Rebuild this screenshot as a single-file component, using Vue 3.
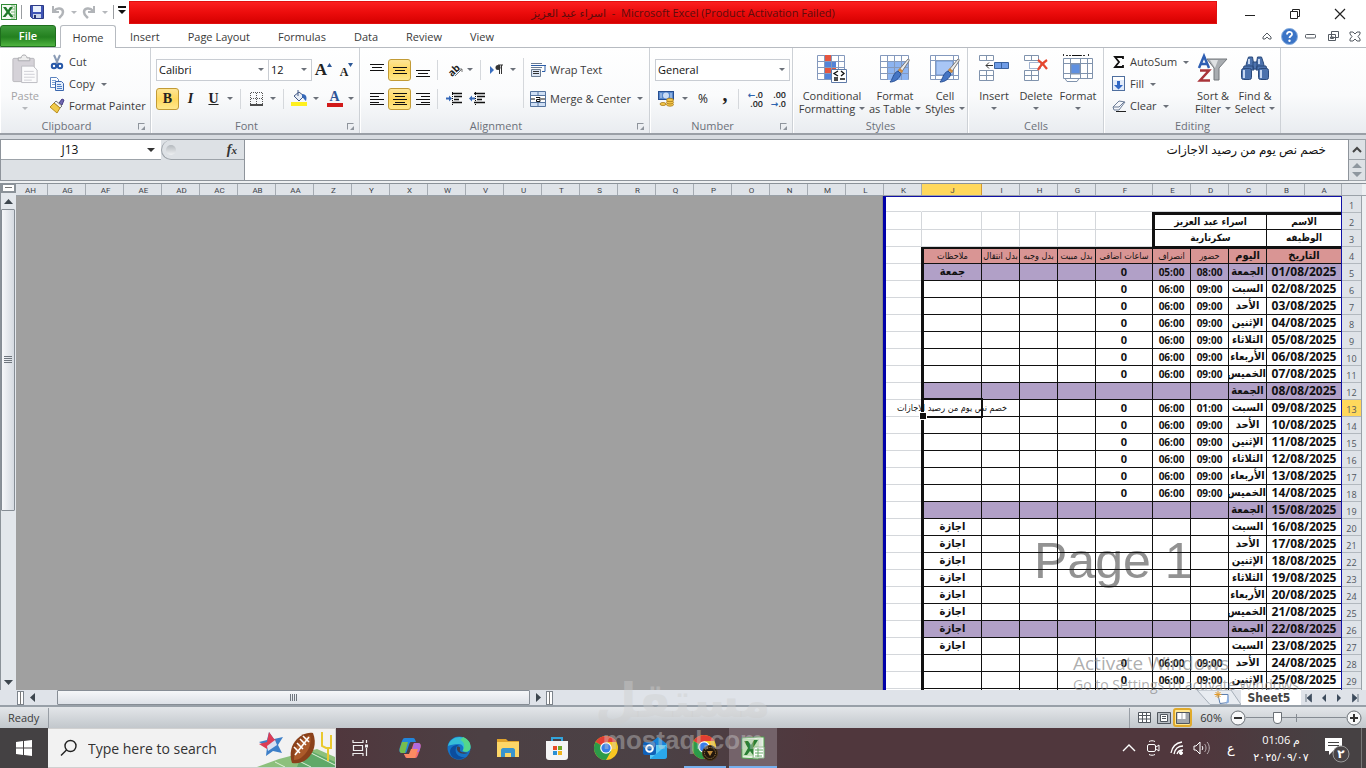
<script setup>
import { ref } from 'vue'

const tabs = ['Insert', 'Page Layout', 'Formulas', 'Data', 'Review', 'View']
const fontName = ref('Calibri')
const fontSize = ref('12')
const numberFormat = ref('General')
const cellRef = ref('J13')
const formula = ref('خصم نص يوم من رصيد الاجازات')
const zoom = ref(30)

const columns = 'AG AF AE AD AC AB AA Z Y X W V U T S R Q P O N M L K J I H G F E D C B A'.split(' ')

const dayNames = ['الجمعة', 'السبت', 'الأحد', 'الإثنين', 'الثلاثاء', 'الأربعاء', 'الخميس']
const heads = ['اليوم', 'حضور', 'انصراف', 'ساعات اضافى', 'بدل مبيت', 'بدل وجبه', 'بدل انتقال', 'ملاحظات']

const days = Array.from({ length: 26 }, (_, i) => {
  const d = i + 1
  const friday = i % 7 === 0
  const leave = d >= 16 && d <= 23
  const worked = d === 1 || (!friday && !leave)
  return {
    d,
    date: String(d).padStart(2, '0') + '/08/2025',
    day: dayNames[i % 7],
    friday,
    start: worked ? (d === 1 ? '08:00' : d === 9 ? '01:00' : '09:00') : '',
    end: worked ? (d === 1 ? '05:00' : '06:00') : '',
    extra: worked ? '0' : '',
    note: d === 1 ? 'جمعة' : leave ? 'اجازة' : ''
  }
})
</script>

<template>
  <div class="app">
    <header class="titlebar">
      <div class="quick">
        <svg class="xl" width="18" height="18" viewBox="0 0 18 18"><rect x="1.500" y="1.500" width="15" height="15" fill="#f4faf2" stroke="#2f8a35"/><path d="M11 3h4v12h-4M11 6h4M11 9h4M11 12h4" fill="none" stroke="#7db97a"/><path d="M3 4h3l2 3 2-3h3L9.500 9l4 5h-3L8 10.800 5.500 14H2.500L6.500 9z" fill="#207a2a"/></svg>
        <i class="vline"></i>
        <button aria-label="Save"><svg width="16" height="16" viewBox="0 0 16 16"><path d="M1.500 1.500h13v13h-11l-2-2z" fill="#3f55b5" stroke="#2c3b86"/><path d="M4 2h8v6H4z" fill="#e9f0fb"/><path d="M4 10h8v4H4z" fill="#c9d4ea"/><path d="M5 11h2v3H5z" fill="#26336f"/></svg></button>
        <button class="wide" aria-label="Undo"><svg width="14" height="14" viewBox="0 0 14 14"><path d="M2 1v6h6" fill="none" stroke="#b1b4b8" stroke-width="2"/><path d="M3 6c3-4 9-3 9 1 0 3-2 4-4 6" fill="none" stroke="#b1b4b8" stroke-width="2.500"/></svg><i class="dd pale"></i></button>
        <button class="wide" aria-label="Redo"><svg width="14" height="14" viewBox="0 0 14 14"><path d="M12 1v6H6" fill="none" stroke="#b1b4b8" stroke-width="2"/><path d="M11 6C8 2 2 3 2 7c0 3 2 4 4 6" fill="none" stroke="#b1b4b8" stroke-width="2.500"/></svg><i class="dd pale"></i></button>
        <i class="vline"></i>
        <button class="customize" aria-label="Customize Quick Access Toolbar"><i></i></button>
      </div>
      <div class="caption" dir="ltr"><bdi>اسراء عبد العزيز</bdi>&nbsp; - &nbsp;Microsoft Excel (Product Activation Failed)</div>
      <div class="winbtns">
        <button aria-label="Minimize"><svg width="12" height="12"><path d="M1 7.500h10" stroke="#222"/></svg></button>
        <button aria-label="Restore"><svg width="12" height="12" fill="none" stroke="#222"><path d="M1.500 3.500h7v7h-7zM3.500 3V1.500h7v7H9"/></svg></button>
        <button aria-label="Close"><svg width="12" height="12"><path d="M1 1l10 10M11 1L1 11" stroke="#222" stroke-width="1.200"/></svg></button>
      </div>
    </header>

    <nav class="tabs">
      <button class="file">File</button>
      <button class="home">Home</button>
      <button v-for="t in tabs" :key="t" class="tab">{{ t }}</button>
      <div class="docbtns">
        <button aria-label="Minimize the Ribbon"><svg width="10" height="9" viewBox="0 0 10 9"><path d="M1 5l4-4 4 4v2H7L5 5 3 7H1z" fill="#fff" stroke="#555b63"/></svg></button>
        <button aria-label="Help"><svg width="17" height="17" viewBox="0 0 17 17"><circle cx="8.500" cy="8.500" r="8" fill="#3b74c6" stroke="#8bb0df"/><path d="M6 6.500C6 3 11 3 11 6.200 11 8 8.500 8 8.500 10" fill="none" stroke="#fff" stroke-width="1.800"/><circle cx="8.500" cy="12.700" r="1.200" fill="#fff"/></svg></button>
        <button aria-label="Minimize window"><svg width="12" height="6"><rect x=".5" y="1.500" width="10" height="3.500" rx="1" fill="#fff" stroke="#555b63"/></svg></button>
        <button aria-label="Restore window"><svg width="13" height="12" fill="#fff" stroke="#555b63"><path d="M4.500 1.500h7v6h-7zM1.500 4.500h7v6h-7zM3.500 7h3v1.500h-3z"/></svg></button>
        <button aria-label="Close window"><svg width="12" height="11" viewBox="0 0 12 11"><path d="M1 1h3l2 2 2-2h3v2L9 5.500 11 8v2H8L6 8l-2 2H1V8l2-2.500L1 3z" fill="#fff" stroke="#555b63"/></svg></button>
      </div>
    </nav>

    <section class="ribbon">
      <div class="group clip">
        <div class="body">
          <button class="big disabled">
            <svg width="28" height="31" viewBox="0 0 28 31"><rect x="1.500" y="4.500" width="22" height="24" rx="1" fill="#d5d2d8" stroke="#b9b7bd"/><path d="M7 7V4h3c0-4 6-4 6 0h3v3z" fill="#eee" stroke="#a9a9ad"/><path d="M10.500 12.500h12l4 4v13h-16z" fill="#fbfbfc" stroke="#bcbcc2"/><path d="M13 18h10M13 21h11M13 24h11M13 27h8" stroke="#cfcfd6"/></svg>
            <span>Paste</span><i class="dd pale"></i>
          </button>
          <div class="stack">
            <button class="small"><svg width="16" height="16" viewBox="0 0 16 16"><path d="M5 1l4 9M11 1L7 10" stroke="#8a9bb5" stroke-width="2"/><circle cx="5" cy="12" r="2.200" fill="none" stroke="#2758a8" stroke-width="2"/><circle cx="11" cy="12" r="2.200" fill="none" stroke="#2758a8" stroke-width="2"/></svg>Cut</button>
            <button class="small"><svg width="16" height="16" viewBox="0 0 16 16"><path d="M1.500 1.500h6l2 2v8h-8z" fill="#fff" stroke="#5b83bf"/><path d="M3 4.500h4M3 6.500h5M3 8.500h5" stroke="#7ea3d6"/><path d="M6.500 5.500h6l2 2v7h-8z" fill="#e4eefb" stroke="#3a67ae"/><path d="M8 8.500h4M8 10.500h5M8 12.500h5" stroke="#4f80c6"/></svg>Copy<i class="dd"></i></button>
            <button class="small"><svg width="16" height="16" viewBox="0 0 16 16"><path d="M10 5l3-4 2 1-2 5z" fill="#7068b0" stroke="#443c86"/><path d="M7 3l6 5-2 2-6-5z" fill="#f4f4f4" stroke="#777"/><path d="M5 5l6 5-3 5-7-6z" fill="#f0ca49" stroke="#b88c1c"/></svg>Format Painter</button>
          </div>
        </div>
        <div class="label">Clipboard<i class="launch"></i></div>
      </div>

      <div class="group font">
        <div class="rows">
          <div class="line">
            <span class="combo w-name"><select v-model="fontName" aria-label="Font"><option>Calibri</option></select><i class="dd"></i></span>
            <span class="combo w-size"><select v-model="fontSize" aria-label="Font size"><option>12</option></select><i class="dd"></i></span>
            <button class="ico grow" aria-label="Increase font size"><b class="serif">A</b><svg width="5" height="4"><path d="M0 4l2.500-4L5 4z" fill="#2b5797"/></svg></button>
            <button class="ico shrink" aria-label="Decrease font size"><b class="serif">A</b><svg width="5" height="4"><path d="M0 0h5L2.500 4z" fill="#2b5797"/></svg></button>
          </div>
          <div class="line">
            <button class="ico on" aria-label="Bold"><b class="serif">B</b></button>
            <button class="ico" aria-label="Italic"><b class="serif italic">I</b></button>
            <button class="ico" aria-label="Underline"><b class="serif under">U</b></button><i class="dd ddgap"></i>
            <i class="sep"></i>
            <button class="ico" aria-label="Borders"><svg width="14" height="14"><path d="M.5 1v11M6.500 1v11M12.500 1v11M1 .5h12M1 6.500h12" stroke="#555" stroke-dasharray="1 1"/><path d="M0 13h13" stroke="#111" stroke-width="1.500"/></svg></button><i class="dd ddgap"></i>
            <i class="sep"></i>
            <button class="ico" aria-label="Fill color"><svg width="17" height="17" viewBox="0 0 17 17"><path d="M3 6l5-4 5 4-5 5z" fill="#e8eef7" stroke="#445a86"/><path d="M7 0v6" stroke="#445a86"/><path d="M11 4c5 0 5 4 4 7-2-1-2-3-4-4z" fill="#3568b8"/><rect x="0" y="12" width="16" height="4" fill="#fff01e"/></svg></button><i class="dd ddgap"></i>
            <button class="ico" aria-label="Font color"><span class="fcolor serif">A</span></button><i class="dd ddgap"></i>
          </div>
        </div>
        <div class="label">Font<i class="launch"></i></div>
      </div>

      <div class="group align">
        <div class="body">
          <div class="rows">
            <div class="line">
              <button class="ico" aria-label="Top align"><svg width="14" height="16" stroke="#111"><path d="M0 2.500h14M2 5.500h10M0 8.500h14"/></svg></button>
              <button class="ico on" aria-label="Middle align"><svg width="14" height="16" stroke="#111"><path d="M0 5.500h14M2 8.500h10M0 11.500h14"/></svg></button>
              <button class="ico" aria-label="Bottom align"><svg width="14" height="16" stroke="#111"><path d="M0 8.500h14M2 11.500h10M0 14.500h14"/></svg></button>
              <i class="sep"></i>
              <button class="ico orient" aria-label="Orientation"><svg width="17" height="17" viewBox="0 0 17 17"><text x="0" y="13" transform="rotate(-45 6 10)" font-size="10" font-weight="700" fill="#222">ab</text><path d="M7 15l7-7M14 11V8h-3" stroke="#777" fill="none"/></svg></button><i class="dd ddgap"></i>
              <i class="sep"></i>
              <button class="ico" aria-label="Text direction"><svg width="14" height="12" viewBox="0 0 14 12"><path d="M0 2l4 4-4 4z" fill="#3a6fc0"/><path d="M8 1h5M9.500 1v9M11.500 1v9" stroke="#333" fill="none"/><circle cx="8" cy="3.500" r="2.500" fill="#333"/></svg></button><i class="dd ddgap"></i>
            </div>
            <div class="line">
              <button class="ico" aria-label="Align left"><svg width="14" height="14" stroke="#111"><path d="M0 1.500h14M0 4.500h9M0 7.500h14M0 10.500h9M0 12.500h14"/></svg></button>
              <button class="ico on" aria-label="Center"><svg width="14" height="14" stroke="#111"><path d="M0 1.500h14M2 4.500h10M0 7.500h14M2 10.500h10M0 12.500h14"/></svg></button>
              <button class="ico" aria-label="Align right"><svg width="14" height="14" stroke="#111"><path d="M0 1.500h14M5 4.500h9M0 7.500h14M5 10.500h9M0 12.500h14"/></svg></button>
              <i class="sep"></i>
              <button class="ico" aria-label="Decrease indent"><svg width="16" height="14" viewBox="0 0 16 14"><path d="M6 1.500h10M8 4.500h8M8 7.500h5M6 10.500h10" stroke="#111" stroke-width="1.500"/><path d="M6.500 0v14" stroke="#111" stroke-dasharray="1 1"/><path d="M0 6.500h4" stroke="#3568b8" stroke-width="2"/><path d="M3 3.500l3 3-3 3z" fill="#3568b8"/></svg></button>
              <button class="ico" aria-label="Increase indent"><svg width="16" height="14" viewBox="0 0 16 14"><path d="M5 1.500h11M8 4.500h8M8 7.500h5M5 10.500h11" stroke="#111" stroke-width="1.500"/><path d="M6.500 0v14" stroke="#111" stroke-dasharray="1 1"/><path d="M2 6.500h4" stroke="#3568b8" stroke-width="2"/><path d="M3 3.500l-3 3 3 3z" fill="#3568b8"/></svg></button>
            </div>
          </div>
          <i class="sep tall"></i>
          <div class="rows texts">
            <div class="line"><button class="small"><svg width="16" height="16" viewBox="0 0 16 16"><path d="M1 1.500h11M1 5.500h11" stroke="#6b7c93"/><path d="M1 3.500h15M10 3.500h5v6h-3" stroke="#2d5ea8" fill="none"/><path d="M1.500 7.500h9v7h-9z" fill="#dce6f4" stroke="#6b7c93"/><path d="M3 9.500h6M3 11.500h6" stroke="#333"/></svg>Wrap Text</button></div>
            <div class="line"><button class="small"><svg width="16" height="16" viewBox="0 0 16 16"><path d="M.5.500h15v15H.5zM.5 4.500h15M.5 11.500h15M8 1v3M8 12v3" fill="#cfdff4" stroke="#55749f"/><path d="M1 5h14v6H1z" fill="#fff"/><path d="M1 8h4M11 8h4" stroke="#111"/><path d="M6 6.500h4v4H6.500V8.500H10" fill="none" stroke="#111"/></svg>Merge &amp; Center<i class="dd"></i></button></div>
          </div>
        </div>
        <div class="label">Alignment<i class="launch"></i></div>
      </div>

      <div class="group number">
        <div class="rows">
          <div class="line"><span class="combo w-num"><select v-model="numberFormat" aria-label="Number format"><option>General</option></select><i class="dd"></i></span></div>
          <div class="line">
            <button class="ico" aria-label="Accounting format"><svg width="17" height="17" viewBox="0 0 17 17"><rect x=".5" y="1.500" width="15" height="8" fill="#5788cc" stroke="#274f91"/><ellipse cx="8" cy="5.500" rx="3" ry="3" fill="#cadcf4"/><path d="M3 3v5M13 3v5" stroke="#cadcf4"/><g fill="#f3c74b" stroke="#a87916" stroke-width=".8"><ellipse cx="12" cy="14.500" rx="3.500" ry="1.700"/><ellipse cx="12" cy="12.300" rx="3.500" ry="1.700"/><ellipse cx="12" cy="10" rx="3.500" ry="1.700"/><ellipse cx="5" cy="14" rx="3" ry="1.500"/></g></svg></button><i class="dd ddgap"></i>
            <button class="ico glyph">%</button>
            <button class="ico glyph comma" aria-label="Comma style">,</button>
            <i class="sep"></i>
            <button class="ico dec"><span><em>←</em>.0</span><span>.00</span></button>
            <button class="ico dec"><span>.00</span><span><em>→</em>.0</span></button>
          </div>
        </div>
        <div class="label">Number<i class="launch"></i></div>
      </div>

      <div class="group styles">
        <div class="body">
          <button class="big w68">
            <svg width="30" height="30" viewBox="0 0 30 30"><path d="M.5 1.500h27v24H.5z" fill="#fff" stroke="#8499bd"/><path d="M7 1h7v6H7zM7 13h12v6H7z" fill="#e5553f"/><path d="M7 7h12v6H7zM7 19h7v6H7z" fill="#5383d8"/><path d="M.5 7.500h27M.5 13.500h27M.5 19.500h27M7.500 1v25M14.500 1v25M21.500 1v25" stroke="#8499bd"/><path d="M14.500 15.500h15v13h-15z" fill="#fff" stroke="#5e7aa8"/><path d="M21 17l-4 2.500 4 2.500M17 24h4M17 26h4M24 17l3 2.500-3 2.500M23 25h5" fill="none" stroke="#111" stroke-width="1.300"/></svg>
            <span>Conditional</span><span>Formatting<i class="dd"></i></span>
          </button>
          <button class="big w58">
            <svg width="30" height="30" viewBox="0 0 30 30"><path d="M.5 1.500h28v24H.5z" fill="#fff" stroke="#8499bd"/><path d="M8 8h20v18H8z" fill="#8db4f1"/><path d="M.5 7.500h28M.5 13.500h28M.5 19.500h28M7.500 1v25M14.500 1v25M21.500 1v25" stroke="#8499bd"/><path d="M28 5c1 0 1.500 1 1 2l-8 12-3-2z" fill="#ececec" stroke="#777"/><path d="M18 17l3 3c-2 5-6 8-11 8 3-3 3-9 8-11z" fill="#4575c4" stroke="#284f93"/><path d="M20 14l3 3-1 2-4-3z" fill="#d08a3e"/></svg>
            <span>Format</span><span>as Table<i class="dd"></i></span>
          </button>
          <button class="big w42">
            <svg width="30" height="30" viewBox="0 0 30 30"><path d="M.5 1.500h28v24H.5z" fill="#fff" stroke="#8499bd"/><path d="M6 7h17v14H6z" fill="#a9c6f5" stroke="#6f93cf"/><path d="M.5 6.500h28M.5 21.500h28M5.500 1v25M23.500 1v25" stroke="#8499bd"/><path d="M28 5c1 0 1.500 1 1 2l-8 12-3-2z" fill="#ececec" stroke="#777"/><path d="M18 17l3 3c-2 5-6 8-11 8 3-3 3-9 8-11z" fill="#4575c4" stroke="#284f93"/><path d="M20 14l3 3-1 2-4-3z" fill="#d08a3e"/></svg>
            <span>Cell</span><span>Styles<i class="dd"></i></span>
          </button>
        </div>
        <div class="label">Styles</div>
      </div>

      <div class="group cells">
        <div class="body">
          <button class="big w42">
            <svg width="30" height="30" viewBox="0 0 30 30" fill="#fff" stroke="#8093ad"><path d="M.5 1.500h14v5H.5zM7.500 2v5M.5 16.500h14v10H.5zM7.500 17v10M.5 21.500h14"/><path d="M15.500 8.500h14v6h-14zM22.500 9v6" fill="#6f9ce6" stroke="#39629f"/><path d="M7 11.500h7M10 8.500l-3 3 3 3" fill="none" stroke="#333"/></svg>
            <span>Insert</span><i class="dd"></i>
          </button>
          <button class="big w42">
            <svg width="30" height="30" viewBox="0 0 30 30" fill="#fff" stroke="#8093ad"><path d="M3.500 1.500h14v5h-14zM10.500 2v5M3.500 16.500h14v10h-14zM10.500 17v10M3.500 21.500h14"/><path d="M8.500 8.500h11v6h-11z" stroke="#4a6da5" stroke-dasharray="1 1"/><path d="M17 6c3 2 6 5 9 9M26 6c-4 3-7 6-9 10" fill="none" stroke="#e5472f" stroke-width="2.200"/></svg>
            <span>Delete</span><i class="dd"></i>
          </button>
          <button class="big w42">
            <svg width="32" height="30" viewBox="0 0 32 30" fill="#fff" stroke="#8093ad"><path d="M1.500 4.500h29v20h-29z"/><path d="M9 10h9v10H9z" fill="#5f90e0"/><path fill="none" d="M1 9.500h29M1 19.500h29M8.500 5v20M18.500 5v20M25.500 5v20"/><path d="M3 24.500l2 3h10l2-3z"/><path d="M1.500 0v3M26.500 0v3M4 1.500h6M18 1.500h6" stroke="#333" stroke-dasharray="2 1"/><path d="M10 1.500h9" stroke="#111"/></svg>
            <span>Format</span><i class="dd"></i>
          </button>
        </div>
        <div class="label">Cells</div>
      </div>

      <div class="group editing">
        <div class="body">
          <div class="stack">
            <button class="small"><svg width="14" height="16" viewBox="0 0 14 16"><path d="M11 5V3H3l4 5-4 5h8v-2" fill="none" stroke="#111" stroke-width="1.800"/></svg>AutoSum<i class="dd"></i></button>
            <button class="small"><svg width="14" height="16" viewBox="0 0 14 16"><rect x=".5" y=".5" width="12" height="14" fill="#e1ebfa" stroke="#4f6f9f"/><path d="M1 1h11v3H1z" fill="#fff"/><path d="M5 5h3v4h3l-4.500 4.500L2 9h3z" fill="#2f66c4"/></svg>Fill<i class="dd"></i></button>
            <button class="small"><svg width="14" height="14" viewBox="0 0 14 14"><path d="M7 2l6 1-6 8H2L1 8z" fill="#f4f6fa" stroke="#6d7d97"/><path d="M1 8h6l5-5" fill="none" stroke="#6d7d97"/><path d="M4 12.500h10" stroke="#222"/></svg>Clear<i class="dd"></i></button>
          </div>
          <button class="big w42">
            <svg width="30" height="30" viewBox="0 0 30 30"><path d="M9 5h20l-8 9v12h-5V14z" fill="#a9adb1" stroke="#74787d"/><path d="M12 6h8l-3 8z" fill="#dfe1e3"/><path d="M1 14L6 2l5 12M3 10h6" fill="none" stroke="#2f5fb3" stroke-width="2.500"/><path d="M2 16.500h9l-9 10h10" fill="none" stroke="#a9343a" stroke-width="2.500"/></svg>
            <span>Sort &amp;</span><span>Filter<i class="dd"></i></span>
          </button>
          <button class="big w42">
            <svg width="28" height="30" viewBox="0 0 28 30"><g fill="#4c72ad" stroke="#2b4a7c"><path d="M5.500 9l2-6h4l1 6v5h-8zM22.500 9l-2-6h-4l-1 6v5h8z"/><path d="M3 12h9l1 4H2zM25 12h-9l-1 4h11zM12 8h4v7h-4z"/><rect x=".5" y="14.500" width="10" height="11" rx="2"/><rect x="17.500" y="14.500" width="10" height="11" rx="2"/></g><path d="M3 16v8M20 16v8M8 5v5M18 5v5" stroke="#c7d8f2" stroke-width="2"/></svg>
            <span>Find &amp;</span><span>Select<i class="dd"></i></span>
          </button>
        </div>
        <div class="label">Editing</div>
      </div>
    </section>

    <section class="fbar">
      <div class="fleft">
        <div class="namebox"><input v-model="cellRef" aria-label="Name Box"><i class="dd dark"></i></div>
        <div class="fxarea"><i class="knob"></i><button aria-label="Insert function">f<small>x</small></button></div>
      </div>
      <textarea v-model="formula" dir="rtl" rows="1" aria-label="Formula Bar"></textarea>
      <div class="fscroll">
        <button aria-label="Expand Formula Bar"><svg width="10" height="6"><path d="M1 5l4-4 4 4" fill="none" stroke="#444" stroke-width="2"/></svg></button>
        <div><svg width="10" height="16"><path d="M0 6l5-5 5 5zM0 10h10l-5 5z" fill="#8e979f"/></svg></div>
      </div>
    </section>

    <main class="sheet">
      <div class="vscroll">
        <div class="split"><i></i></div>
        <button aria-label="Scroll up"><svg width="9" height="5"><path d="M0 5l4.500-5L9 5z" fill="#3d464e"/></svg></button>
        <div class="vtrack"><div class="vthumb"><i></i></div></div>
        <button aria-label="Scroll down"><svg width="9" height="5"><path d="M0 0h9L4.500 5z" fill="#3d464e"/></svg></button>
      </div>
      <div class="canvas">
        <div class="colheads">
          <span class="ch rest">AH</span>
          <span v-for="c in columns" :key="c" class="ch" :class="'c' + c">{{ c }}</span>
          <span class="corner"></span>
        </div>
        <div class="area">
          <div class="outside"></div>
          <div class="page">
            <div class="pagemark">Page 1</div>
            <table dir="rtl">
              <colgroup><col class="k75"><col class="k38"><col class="k38"><col class="k38"><col class="k57"><col class="k38"><col class="k38"><col class="k38"><col class="k60"><col></colgroup>
              <tbody>
                <tr class="r1"><td colspan="9" class="plain nol"></td><td class="plain"></td></tr>
                <tr class="r2"><th class="top">الاسم</th><td colspan="3" class="top thick">اسراء عبد العزيز</td><td class="plain"></td><td class="plain"></td><td class="plain"></td><td class="plain"></td><td class="plain"></td><td class="plain"></td></tr>
                <tr class="r3"><th>الوظيفه</th><td colspan="3" class="thick">سكرتارية</td><td class="plain"></td><td class="plain"></td><td class="plain"></td><td class="plain"></td><td class="plain"></td><td class="plain"></td></tr>
                <tr class="heads"><th>التاريخ</th><th v-for="(h, i) in heads" :key="h" :class="{ sm: i > 0, thick: i === 7 }">{{ h }}</th><td class="plain"></td></tr>
                <tr v-for="r in days" :key="r.d" :class="{ fri: r.friday }">
                  <td class="date">{{ r.date }}</td><td class="day">{{ r.day }}</td><td class="time">{{ r.start }}</td><td class="time">{{ r.end }}</td><td class="zero">{{ r.extra }}</td><td></td><td></td><td></td>
                  <td class="thick" :class="{ picked: r.d === 9 }"><div v-if="r.d === 9" class="cursor"><span>{{ formula }}</span></div><template v-else>{{ r.note }}</template></td>
                  <td class="plain"></td>
                </tr>
              </tbody>
            </table>
          </div>
          <div class="rowheads"><span v-for="n in 30" :key="n" :class="{ hot: n === 13 }">{{ n }}</span></div>
          <div class="edge"></div>
        </div>
      </div>
    </main>

    <div class="bottom">
      <i class="nub"></i>
      <button aria-label="Scroll left"><svg width="5" height="9"><path d="M5 0v9L0 4.500z" fill="#3d464e"/></svg></button>
      <div class="hthumb"><i></i></div>
      <button aria-label="Scroll right"><svg width="5" height="9"><path d="M0 0v9l5-4.500z" fill="#3d464e"/></svg></button>
      <i class="nub second"></i>
      <div class="filler"></div>
      <button class="newsheet" aria-label="Insert Worksheet"><svg width="48" height="15" viewBox="0 0 48 15"><path d="M0 0l13 14.500h31L34 0z" fill="#e8ecf1" stroke="#a7b0ba"/><path d="M21 4.500h10v8l-8 1z" fill="#fff" stroke="#5e7fae"/><path d="M31 4l1 8-3 2z" fill="#8fb3e4"/><path d="M21 1v7M17.500 4.500h7M18.500 2l5 5M23.500 2l-5 5" stroke="#e09a2b"/></svg></button>
      <button class="sheettab">Sheet5</button>
      <div class="sheetnav">
        <button aria-label="First sheet"><svg width="7" height="8"><path d="M1 0v8M6.500 0v8L2 4z" fill="#3c4b5c" stroke="#3c4b5c" stroke-width=".7"/></svg></button>
        <button aria-label="Previous sheet"><svg width="5" height="8"><path d="M4 0v8L0 4z" fill="#3c4b5c"/></svg></button>
        <button aria-label="Next sheet"><svg width="5" height="8"><path d="M0 0v8l4-4z" fill="#3c4b5c"/></svg></button>
        <button aria-label="Last sheet"><svg width="7" height="8"><path d="M6 0v8M.5 0v8L5 4z" fill="#3c4b5c" stroke="#3c4b5c" stroke-width=".7"/></svg></button>
      </div>
    </div>

    <footer class="status">
      <span class="ready">Ready</span>
      <div class="statusfill"></div>
      <button class="view" aria-label="Normal"><svg width="13" height="11"><path d="M.5.500h12v10H.5zM.5 3.500h12M.5 7h12M4.500 0v11M8.500 0v11" fill="#fff" stroke="#51575e"/></svg></button>
      <button class="view" aria-label="Page Layout"><svg width="14" height="12"><path d="M.5.500h13v11H.5z" fill="#b9bec4" stroke="#51575e"/><path d="M3.500 2.500h7v7h-7zM5 4.500h4M5 6.500h4" fill="#fff" stroke="#51575e"/></svg></button>
      <button class="view sel" aria-label="Page Break Preview"><svg width="14" height="12"><path d="M.5.500h13v11H.5z" fill="#a3a8ad" stroke="#51575e"/><path d="M1.500 1h4v6h-4zM6.500 1h3v6h-3z" fill="#fff"/></svg></button>
      <span class="pct">60%</span>
      <button class="round" aria-label="Zoom out"><svg width="16" height="16"><circle cx="8" cy="8" r="7" fill="#f7f8f9" stroke="#6a7076"/><path d="M4 8h8" stroke="#333" stroke-width="2"/></svg></button>
      <div class="slider"><i></i><input v-model="zoom" type="range" min="0" max="100" aria-label="Zoom"></div>
      <button class="round" aria-label="Zoom in"><svg width="16" height="16"><circle cx="8" cy="8" r="7" fill="#f7f8f9" stroke="#6a7076"/><path d="M4 8h8M8 4v8" stroke="#333" stroke-width="2"/></svg></button>
    </footer>

    <div class="taskbar">
      <button class="start" aria-label="Start"><svg width="16" height="16" fill="#fff"><path d="M0 2l7-1v6.500H0zM8 1l8-1v7.500H8zM0 8.500h7V15l-7-1zM8 8.500h8V16l-8-1z"/></svg></button>
      <div class="search">
        <svg class="mag" width="18" height="18"><circle cx="10.500" cy="7" r="5.500" fill="none" stroke="#222" stroke-width="1.400"/><path d="M6.500 11L1 16.500" stroke="#222" stroke-width="1.500"/></svg>
        <input placeholder="Type here to search" aria-label="Type here to search">
        <svg class="art" width="78" height="38" viewBox="0 0 78 38"><path d="M0 38L22 30 60 20l18 8v10z" fill="#8cc07c"/><path d="M44 28l12-5 22 10v5H40z" fill="#5fa968"/><path d="M18 33l10 5M34 28l20 10M54 24l24 12" stroke="#dff0d8"/><path d="M65 3v14l4 2h5V6M71 18v14" fill="none" stroke="#e9c92f" stroke-width="2"/><path d="M12 3l5 7 9-2-5 8 4 8-9-2-7 5 1-9-8-5 8-2z" fill="#3d7fc8"/><path d="M12 3l5 7 2 1-9 9-8-5 8-2z" fill="#dd3c56"/><path d="M10 17l8-6 2 5-9 6z" fill="#d8e1f3"/><path d="M56 4c4 10 1 20-6 26-5 4-10 5-15 4-3-9-1-18 5-24 5-5 11-7 16-6z" fill="#8a411b"/><path d="M53 6c2 8-1 16-7 21-3 3-6 4-9 4 0-8 2-14 6-18s7-6 10-7z" fill="#ab5a2a"/><path d="M52 8L38 26M46 7l6 6M43 10l6 6M40 14l6 6M37 18l6 6" stroke="#fff" stroke-width="1.600"/></svg>
      </div>
      <button class="app-b" aria-label="Task View"><svg width="17" height="16" fill="none" stroke="#eee"><path d="M1 0v2.500h10V0M1.500 5.500h9v5h-9zM1 16v-2.500h10V16M14.500 0v3M14.500 8v8" stroke-width="1.200"/><path d="M13 4.500h3v3h-3z" fill="#eee" stroke="none"/></svg></button>
      <button class="app-b" aria-label="Copilot"><svg width="24" height="24" viewBox="0 0 24 24"><path d="M7 2h8c2 0 2 2 3 4h-5c-2 0-3 8-5 11H4c-3 0-3-3-2-6l2-6c1-2 1-3 3-3z" fill="#2186dc"/><path d="M2 12l2-6h6L7 17H4c-2 0-3-2-2-5z" fill="#76bd4d"/><path d="M17 22H9c-2 0-2-2-3-4h5c2 0 3-8 5-11h4c3 0 3 3 2 6l-2 6c-1 2-1 3-3 3z" fill="#f06a73"/><path d="M16 7h4c3 0 3 3 2 6l-1 3h-7z" fill="#b06be0"/><path d="M6 18h5l2-5h7l-3 9H9z" fill="#fb8b62"/></svg></button>
      <button class="app-b" aria-label="Edge"><svg width="24" height="24" viewBox="0 0 24 24"><circle cx="12" cy="12" r="11.500" fill="#1572c6"/><path d="M1 10C4-2 22-2 23.500 11c0 4-4 6-8 4 2-2 1-7-4-7C7 8 3 9 1 10z" fill="#35bdd7"/><path d="M16 1c5 2 8 6 7.500 10 0 4-4 6-8 4 3-4 2-9-2-11z" fill="#54d68a"/><path d="M9 12c-2 5 3 10 9 9-7 5-15 1-15-6 1-6 7-6 9-6-2 1-3 2-3 3z" fill="#0c4d9d"/><path d="M10 11c-1 5 4 8 11 6-4-1-9 0-8-4 1-2-2-3-3-2z" fill="#453f49"/></svg></button>
      <button class="app-b" aria-label="File Explorer"><svg width="24" height="22" viewBox="0 0 24 22"><path d="M1 2h9l2 2h11v5H1z" fill="#dfa32c"/><path d="M1 5h22v15H1z" fill="#fcd667"/><path d="M5 20v-7c0-1 1-2 2-2h10c1 0 2 1 2 2v7h-4v-4H9v4z" fill="#3995cf"/></svg></button>
      <button class="app-b" aria-label="Microsoft Store"><svg width="24" height="24" viewBox="0 0 24 24"><path d="M7 6V2h10v4" fill="none" stroke="#32a5dc" stroke-width="2"/><path d="M1 5h22v16c0 2-1 3-3 3H4c-2 0-3-1-3-3z" fill="#f5f5f5"/><path d="M8 10h4v4H8z" fill="#e84b25"/><path d="M13 10h4v4h-4z" fill="#70aa29"/><path d="M8 15h4v4H8z" fill="#2b91d5"/><path d="M13 15h4v4h-4z" fill="#f2b51d"/></svg></button>
      <button class="app-b" aria-label="Chrome"><svg width="24" height="24" viewBox="0 0 24 24"><circle cx="12" cy="12" r="12" fill="#f9c721"/><path d="M12 12L1.600 6A12 12 0 0 1 22.400 6H12z" fill="#e33e32"/><path d="M12 12L1.600 6a12 12 0 0 0 10.400 18l5.200-9z" fill="#2c9b49"/><circle cx="12" cy="12" r="5.800" fill="#fff"/><circle cx="12" cy="12" r="4.600" fill="#387ee8"/></svg></button>
      <button class="app-b" aria-label="Outlook"><svg width="26" height="24" viewBox="0 0 26 24"><path d="M7 8l9-7 9 7v12c0 2-1 3-3 3H9z" fill="#1683d8"/><path d="M8 9h16v9l-8 5H8z" fill="#57c8f5"/><path d="M25 9v11c0 2-1 3-3 3H8z" fill="#2aa8eb"/><rect x="1" y="6" width="13" height="13" rx="2" fill="#0f61b9"/><circle cx="7.500" cy="12.500" r="3.300" fill="none" stroke="#fff" stroke-width="2"/></svg></button>
      <button class="app-b running" aria-label="Chrome profile"><svg width="28" height="26" viewBox="0 0 28 26"><circle cx="13" cy="12" r="12" fill="#f9c721"/><path d="M13 12L2.600 6A12 12 0 0 1 23.400 6H13z" fill="#e33e32"/><path d="M13 12L2.600 6A12 12 0 0 0 13 24l5.200-9z" fill="#2c9b49"/><circle cx="13" cy="12" r="5.800" fill="#fff"/><circle cx="13" cy="12" r="4.600" fill="#387ee8"/><circle cx="19" cy="18" r="7.500" fill="#21170d" stroke="#4d381c"/><circle cx="19" cy="18" r="5.500" fill="none" stroke="#b48a46" stroke-dasharray="1 1"/><path d="M16 16h6l-3 5z" fill="#c08c3a"/></svg></button>
      <button class="app-b running current" aria-label="Excel"><svg width="24" height="24" viewBox="0 0 24 24"><path d="M1 2l16-1h6v18l-6 4-16-1z" fill="#e4f1df" stroke="#4ea24e"/><path d="M2 3h16v17H2z" fill="#bfe0b6"/><path d="M3 5h4l3 4 3-5h4l-5 8 4 7h-4l-3-4-3 4H3l4-7z" fill="#2b7e35"/><path d="M13 11h10v11H12z" fill="#fff" stroke="#8fb98d"/><path d="M14 14h8M14 17h8M14 20h7M17 12v9" stroke="#68a868"/></svg></button>
      <div class="filler"></div>
      <div class="tray">
        <button aria-label="Show hidden icons"><svg width="14" height="8"><path d="M1 7l6-6 6 6" fill="none" stroke="#fff" stroke-width="1.400"/></svg></button>
        <button aria-label="Meet Now"><svg width="14" height="16" fill="none" stroke="#fff"><rect x="1.500" y="4.500" width="8" height="7" rx="1.500"/><path d="M10 7l3-2v6l-3-2M3 1.500c2-1 4-1 6 0M3 14.500c2 1 4 1 6 0"/></svg></button>
        <button aria-label="Network"><svg width="14" height="14" fill="none" stroke="#fff"><path d="M1 12C2 6 6 2 12 1M4 13c1-5 4-8 9-8M7 13c1-3 3-4 6-4" stroke-width="1.300"/><circle cx="11" cy="12" r="1.500" fill="#fff"/></svg></button>
        <button aria-label="Volume"><svg width="17" height="14" fill="none" stroke="#fff"><path d="M1 5h2l4-4v12L3 9H1zM9 5c1 1 1 3 0 4"/><path d="M11.500 3c2 2 2 6 0 8M14 1c3 3 3 9 0 12" stroke="#b9aeb1"/></svg></button>
        <span class="lang">ع</span>
        <span class="clock"><span dir="ltr">01:06 <bdi>م</bdi></span><span dir="rtl">٢٠٢٥/٠٩/٠٧</span></span>
        <button class="note" aria-label="Notifications"><svg width="26" height="26" viewBox="0 0 26 26"><path d="M1 1h17v13H9l-4 4v-4H1z" fill="#fff"/><path d="M4 5.500h11M4 8.500h11" stroke="#444"/><circle cx="17" cy="17" r="8" fill="#4a4547" stroke="#999"/><text x="17" y="21" text-anchor="middle" font-size="12" font-weight="700" fill="#fff">٢</text></svg></button>
      </div>
      <i class="desk"></i>
    </div>

    <div class="activate"><p>Activate Windows</p><small>Go to Settings to activate Windows.</small></div>
    <div class="brand"><b lang="ar">مستقل</b><span>mostaql.com</span></div>
  </div>
</template>

<style>
html, body { margin: 0; height: 100%; overflow: hidden; }
#app { height: 100%; }
</style>

<style scoped>
.app { position: relative; height: 100vh; display: flex; flex-direction: column; overflow: hidden; background: #fff; color: #3b3b3b; font: 11px/14px "Open Sans", "Noto Sans", "DejaVu Sans", sans-serif; }
.app * { box-sizing: border-box; }
button { margin: 0; padding: 0; border: 0; background: none; color: inherit; font: inherit; display: flex; align-items: center; justify-content: center; flex: none; }
svg { display: block; flex: none; overflow: visible; }
input, select, textarea { font: inherit; color: #111; border: 0; margin: 0; padding: 0; background: none; outline: 0; border-radius: 0; appearance: none; }
.filler { flex: 1; min-width: 0; }
.dd { display: inline-block; flex: none; width: 0; height: 0; border: 3px solid transparent; border-top-color: #6b7079; border-bottom: 0; }
.dd.pale { border-top-color: #b5b8bc; }
.dd.dark { border-width: 4px; border-bottom: 0; border-top-color: #333; }

.titlebar { height: 24px; display: flex; flex: none; }
.quick { width: 129px; display: flex; align-items: center; flex: none; }
.vline { width: 1px; height: 14px; background: #9a9da1; margin: 0 4px 0 3px; }
.quick button { width: 22px; }
.quick .wide { width: 31px; gap: 6px; }
.quick .customize { width: 8px; }
.customize i { border: 4px solid transparent; border-bottom: 0; border-top-color: #111; position: relative; }
.customize i::before { content: ""; position: absolute; left: -4px; top: -8px; width: 8px; height: 2px; background: #111; }
.caption { flex: 1; margin-top: 1px; background: linear-gradient(#fb2020, #ec0c0c 50%, #d60000); border: 1px solid #e01010; color: #5c0d0d; text-align: center; line-height: 22px; padding-left: 20px; }
.winbtns { width: 149px; display: flex; align-items: center; padding: 4px 3px 0 10px; flex: none; }
.winbtns button { flex: 1; }

.tabs { height: 24px; display: flex; flex: none; border-bottom: 1px solid #b7bbc1; padding-top: 1px; }
.tabs .file { width: 56px; margin-right: 4px; background: linear-gradient(#3f9a3c, #23801f 55%, #4fb340); border: 1px solid #1f6e1e; border-radius: 3px 3px 0 0; color: #fff; font-weight: 600; }
.tabs .home { width: 56px; height: 24px; margin-bottom: -1px; background: #fff; border: 1px solid #b7bbc1; border-bottom: 0; border-radius: 3px 3px 0 0; }
.tabs .tab { padding: 2px 14px 0; }
.docbtns { margin-left: auto; display: flex; align-items: center; }
.docbtns button { width: 22px; }

.ribbon { height: 87px; flex: none; display: flex; background: linear-gradient(#fff, #fafbfc 55%, #e9ecf0); border-bottom: 2px solid #9a9fa6; }
.group { display: flex; flex-direction: column; flex: none; border-right: 1px solid #cdd1d6; border-left: 1px solid #fff; }
.clip { width: 151px; } .font { width: 209px; } .align { width: 290px; } .number { width: 143px; } .styles { width: 175px; } .cells { width: 136px; } .editing { width: 177px; }
.body { display: flex; height: 70px; }
.styles .body, .cells .body { padding-left: 4px; }
.editing .body { padding-left: 7px; }
.label { position: relative; height: 15px; line-height: 16px; text-align: center; color: #6b7079; padding-right: 18px; }
.styles .label, .cells .label, .editing .label { padding-right: 0; }
.launch { position: absolute; right: 5px; top: 5px; width: 7px; height: 7px; border: 1px solid #8e949c; border-right-color: transparent; border-bottom-color: transparent; }
.launch::after { content: ""; position: absolute; left: 2px; top: 2px; border: 2px solid #8e949c; border-left-color: transparent; border-top-color: transparent; }
.big { flex-direction: column; justify-content: flex-start; padding-top: 6px; line-height: 13px; height: 70px; white-space: nowrap; }
.big svg { margin-bottom: 5px; height: 30px; }
.big span { display: flex; align-items: center; gap: 4px; }
.big > .dd { margin-top: 5px; }
.disabled { color: #a3a3a6; }
.clip .big { width: 48px; }
.w68 { width: 68px; } .w58 { width: 58px; } .w42 { width: 42px; }
.stack { display: flex; flex-direction: column; padding-top: 3px; }
.small { height: 22px; gap: 4px; justify-content: flex-start; white-space: nowrap; }
.small .dd { margin-left: 2px; }
.editing .stack { width: 80px; }
.rows { height: 70px; display: flex; flex-direction: column; gap: 6px; padding: 10px 0 0 4px; }
.line { display: flex; height: 23px; align-items: center; }
.combo { display: flex; align-items: center; height: 22px; border: 1px solid #c9cdd3; background: #fff; padding: 0 4px 0 2px; }
.combo select { flex: 1; min-width: 0; height: 20px; }
.w-name { width: 113px; } .w-size { width: 43px; border-left: 0; } .w-num { width: 135px; }
.ico { width: 23px; height: 22px; border: 1px solid transparent; }
.ico.on { background: linear-gradient(#fde596, #ffd85f 50%, #ffe88b); border-color: #c29b36; border-radius: 3px; }
.serif { font-family: "Liberation Serif", serif; font-size: 14px; line-height: 16px; color: #222; }
.italic { font-style: italic; } .under { text-decoration: underline; }
.grow b { font-size: 17px; } .shrink b { font-size: 12px; margin-top: 4px; }
.grow svg, .shrink svg { align-self: flex-start; margin-top: 3px; }
.fcolor { width: 16px; height: 17px; line-height: 13px; text-align: center; font-weight: 700; color: #2f5597; border-bottom: 4px solid #d11a1a; }
.ddgap { margin: 0 7px 0 3px; }
.font .ddgap { margin: 0 4px 0 2px; }
.sep { width: 1px; height: 20px; background: #d5d8dc; margin: 0 4px 0 3px; }
.sep.tall { height: 50px; margin: 10px 4px 0 0; }
.align .rows:first-child { width: 162px; }
.align .ddgap { margin: 0 4px 0 2px; }
.orient { padding-left: 6px; }
.texts { padding-left: 2px; }
.number .ddgap { margin: 0 4px; }
.glyph { width: 22px; font-size: 12px; color: #222; }
.comma { font: 700 20px/10px "Liberation Serif", serif; padding-bottom: 9px; }
.number .sep { margin: 0 4px 0 2px; }
.dec { flex-direction: column; font-size: 9px; font-weight: 600; line-height: 9px; color: #222; align-items: flex-end; padding-right: 2px; }
.dec span { display: flex; } .dec em { font-style: normal; color: #2f65b0; }

.fbar { flex: none; display: flex; height: 48px; padding-top: 4px; background: #d7dbe0; border-bottom: 2px solid #eef0f2; }
.fleft { width: 245px; border: 1px solid #8e949b; background: #dde1e5; display: grid; grid-template-columns: 160px 1fr; grid-template-rows: 20px 1fr; }
.namebox { display: flex; align-items: center; background: #fff; border-bottom: 1px solid #9da3a9; padding-right: 6px; }
.namebox input { flex: 1; min-width: 0; text-align: center; font-size: 12px; padding-right: 8px; }
.fxarea { display: flex; align-items: center; justify-content: space-between; border: 1px solid #9da3a9; border-width: 0 0 1px 1px; border-radius: 10px 0 0 10px; padding: 0 7px 0 4px; }
.knob { width: 10px; height: 10px; border-radius: 50%; background: linear-gradient(#b4b9be, #eef0f2); }
.fxarea button { font: italic 700 14px/16px "Liberation Serif", serif; color: #333; }
.fxarea small { font-size: 11px; }
.fbar textarea { flex: 1; min-width: 0; height: 42px; background: #fff; border: 1px solid #8e949b; border-left: 0; resize: none; overflow: hidden; padding: 0 22px; font-size: 12px; line-height: 20px; }
.fscroll { width: 17px; border: 1px solid #9da3a9; border-left: 0; background: #dde1e5; height: 42px; }
.fscroll button { width: 16px; height: 20px; border-bottom: 1px solid #9da3a9; }
.fscroll div { display: flex; justify-content: center; padding-top: 2px; }

.sheet { flex: 1; min-height: 0; display: flex; border-top: 1px solid #8b9299; background: #e1e5ea; overflow: hidden; }
.vscroll { width: 16px; flex: none; display: flex; flex-direction: column; background: #e3e7ec; border-left: 1px solid #8b9299; }
.split { height: 9px; border: 2px solid #8b9299; border-top-width: 1px; background: #fff; padding: 2px; }
.split i { display: block; height: 1px; background: #777; }
.vscroll button { height: 16px; }
.vtrack { flex: 1; min-height: 0; }
.vthumb { height: 65%; border: 1px solid #868d95; border-radius: 1px; background: linear-gradient(90deg, #f7f8fa, #d5dae1); display: flex; align-items: center; justify-content: center; margin-right: 1px; }
.vthumb i { width: 8px; height: 8px; background: repeating-linear-gradient(#6f767e 0 1px, transparent 1px 2px); }
.canvas { flex: 1; min-width: 0; display: flex; flex-direction: column; }
.colheads { height: 12px; flex: none; display: flex; font: 8px/13px Roboto, "Open Sans", sans-serif; text-align: center; color: #3c4248; background: #dfe3e8; border-bottom: 1px solid #9aa1a8; }
.ch { width: 38px; flex: none; border-right: 1px solid #a5abb2; padding-left: 2px; }
.rest { flex: 1; min-width: 0; width: auto; padding: 0 2px 0 0; }
.cJ { width: 60px; background: #ffd85c; border-color: #d69a2b; } .cF { width: 57px; } .cA { width: 37px; }
.corner { width: 24px; flex: none; border-right: 4px solid #eef0f2; }
.area { flex: 1; min-height: 0; display: flex; overflow: hidden; }
.outside { flex: 1; background: #a0a0a0; border-right: 1px solid #8a8a8a; }
.page { position: relative; width: 459px; flex: none; border: 1px solid #1111a6; border-left: 3px solid #0000a8; border-bottom: 0; background: #fff; }
.pagemark { position: absolute; left: 148px; top: 336px; font: 50px/56px "Liberation Sans", sans-serif; color: #929292; white-space: nowrap; }
table { position: relative; table-layout: fixed; width: 455px; border-collapse: separate; border-spacing: 0; color: #111; font: 700 11px/14px "DejaVu Sans Condensed", "DejaVu Sans", sans-serif; }
.k75 { width: 75px; } .k38 { width: 38px; } .k57 { width: 57px; } .k60 { width: 60px; }
td, th { padding: 0; height: 17px; text-align: center; white-space: nowrap; font-weight: 700; border: 1px solid #111; border-width: 0 0 1px 1px; }
.r1 td { height: 15px; } .r2 td, .r2 th { height: 18px; }
.r2, .r3 { font-size: 10px; }
td.plain { border-color: #d4d7db; } td.nol { border-left-color: transparent; }
td.plain:last-child { border-left: 0; }
td.thick, th.thick { border-left-width: 3px; }
td.top, th.top { border-top: 3px solid #111; }
.heads th { background: #d99594; border-top: 2px solid #111; overflow: hidden; }
.heads th.sm { font-size: 9px; font-weight: 400; }
.fri td:not(.plain) { background: #b1a0c7; }
td.date, td.time, td.zero { font-family: "Open Sans", "Noto Sans", sans-serif; }
td.day { overflow: hidden; }
td.date { font-size: 12px; }
td.time { font-size: 10px; } td.zero { font-size: 11px; }
td.picked { position: relative; }
.cursor { position: absolute; left: -3px; right: -2px; top: -2px; bottom: -2px; border: 2px solid #111; display: flex; align-items: center; justify-content: center; font-size: 9px; font-weight: 400; }
.cursor::after { content: ""; position: absolute; left: -4px; bottom: -4px; width: 6px; height: 6px; background: #111; border: 1px solid #fff; }
.cursor span { flex: none; }
.rowheads { width: 20px; flex: none; display: flex; flex-direction: column; font-size: 9px; line-height: 20px; text-align: center; color: #50565d; background: #dfe3e8; border-right: 1px solid #9aa1a8; }
.rowheads span { height: 17px; flex: none; border-bottom: 1px solid #b2b8be; }
.rowheads .hot { background: #ffd85c; }
.edge { width: 4px; flex: none; background: #eef0f2; }

.bottom { height: 17px; flex: none; display: flex; align-items: center; background: #dfe3e9; border-bottom: 2px solid #98a0a8; padding: 0 3px 0 17px; }
.nub { width: 7px; height: 14px; border: 1px solid #7d848c; background: linear-gradient(90deg, #fff 2px, #777 2px 3px, #fff 3px); }
.bottom button { width: 16px; height: 15px; }
.hthumb { width: 473px; margin: 0 0 0 17px; height: 15px; border: 1px solid #868d95; border-radius: 1px; background: linear-gradient(#f5f7f9, #dde1e7); display: flex; align-items: center; justify-content: center; }
.hthumb i { width: 8px; height: 7px; background: repeating-linear-gradient(90deg, #6f767e 0 1px, transparent 1px 2px); }
.bottom .newsheet { width: 40px; }
.bottom .sheettab { width: 60px; padding-right: 4px; background: #fff; font: 700 12px/14px "DejaVu Sans Condensed", "Open Sans", sans-serif; color: #444; z-index: 1; }
.sheetnav { display: flex; width: 62px; }
.sheetnav button { flex: 1; width: auto; }

.status { height: 21px; flex: none; display: flex; align-items: center; padding-right: 4px; background: linear-gradient(#e3e6e9, #c2c7cc); }
.ready { width: 49px; padding-left: 8px; line-height: 20px; border-right: 1px solid #989ea5; }
.statusfill { flex: 1; height: 20px; border-right: 1px solid #989ea5; }
.view { width: 19px; height: 19px; }
.statusfill + .view { margin-left: 5px; }
.view.sel { border: 2px solid #e0aa2c; border-radius: 3px; background: #ffe793; }
.pct { width: 38px; text-align: right; padding-right: 8px; color: #333; }
.round { width: 16px; }
.slider { position: relative; width: 100px; height: 20px; display: flex; align-items: center; background: linear-gradient(#858b92, #858b92) center / 100% 1px no-repeat; }
.slider i { position: absolute; left: 50%; top: 6px; width: 1px; height: 8px; background: #858b92; }
.slider input { position: relative; width: 100px; height: 20px; }
.slider input::-webkit-slider-thumb { appearance: none; width: 9px; height: 12px; background: #fff; border: 1px solid #6a7076; border-radius: 1px 1px 5px 5px; }

.taskbar { height: 40px; flex: none; display: flex; background: linear-gradient(90deg, #444143 0, #444143 48px, #50373d 336px, #4c4044 480px, #4b4145 660px, #50373d 820px, #50373d 1200px, #464143 1330px); color: #fff; }
.start { width: 48px; }
.search { width: 288px; display: flex; align-items: center; background: #f2f2f2; border: 1px solid #d0d0d0; border-left: 0; padding-left: 12px; overflow: hidden; }
.search input { flex: 1; min-width: 0; font-size: 14px; padding-left: 10px; }
.search input::placeholder { color: #333; opacity: 1; }
.app-b { width: 49px; }
.running { border-bottom: 2px solid #76b0ee; padding-top: 2px; background-clip: padding-box; width: 42px; margin: 0 3px 0 5px; }
.current { width: 48px; margin: 0; background: #74636a; }
.tray { display: flex; align-items: center; }
.tray button { width: 24px; }
.lang { width: 36px; text-align: center; font-size: 13px; }
.clock { width: 64px; display: flex; flex-direction: column; align-items: center; line-height: 17px; white-space: nowrap; }
.tray .note { width: 48px; padding-top: 4px; }
.desk { width: 5px; border-left: 1px solid #777; }

.activate { position: absolute; right: 58px; bottom: 73px; width: 235px; color: rgba(130, 130, 130, .65); pointer-events: none; white-space: nowrap; }
.activate p { margin: 0; font-size: 19px; line-height: 24px; }
.activate small { display: block; font-size: 14px; line-height: 20px; }
.brand { position: absolute; left: 601px; bottom: 14px; width: 164px; display: flex; flex-direction: column; align-items: center; color: rgba(205, 205, 205, .42); pointer-events: none; font-weight: 700; }
.brand b { font: 700 48px/52px "DejaVu Sans", sans-serif; }
.brand span { font: 700 26px/28px "Liberation Sans", sans-serif; }
</style>
